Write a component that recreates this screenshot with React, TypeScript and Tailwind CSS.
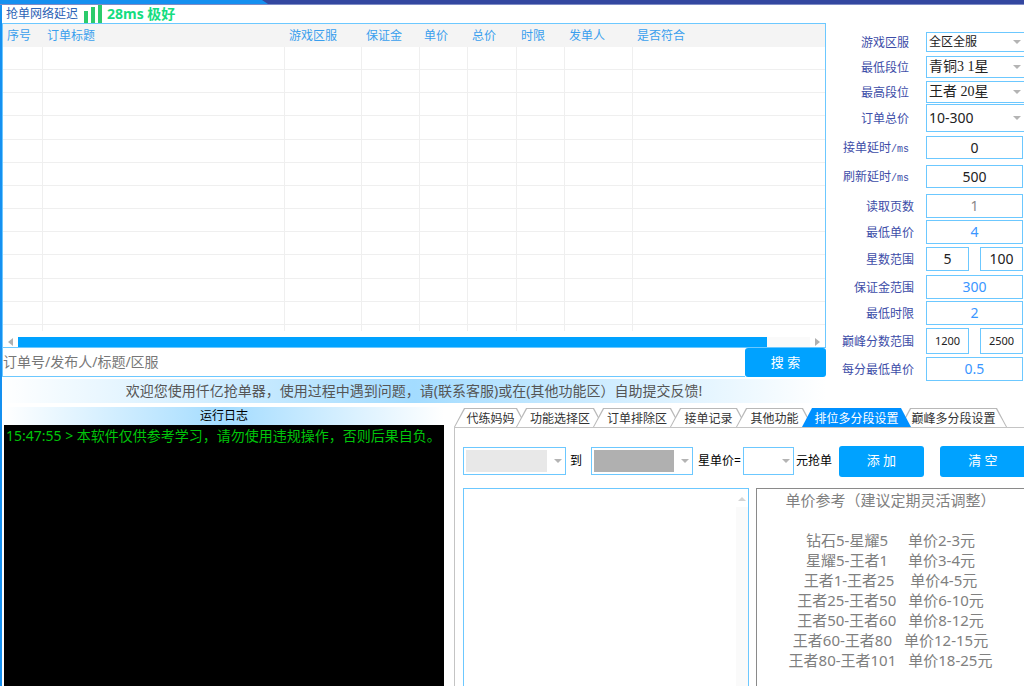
import { useState, type ReactNode } from 'react'

const COLUMNS = [
  { name: '序号', width: 'w-[40px]' },
  { name: '订单标题', width: 'w-[242px]' },
  { name: '游戏区服', width: 'w-[77px]' },
  { name: '保证金', width: 'w-[58px]' },
  { name: '单价', width: 'w-[48px]' },
  { name: '总价', width: 'w-[49px]' },
  { name: '时限', width: 'w-[48px]' },
  { name: '发单人', width: 'w-[68px]' },
  { name: '是否符合', width: '' },
]

const TABS = [
  { name: '代练妈妈', width: 'w-[73px]' },
  { name: '功能选择区', width: 'w-[88px]' },
  { name: '订单排除区', width: 'w-[88px]' },
  { name: '接单记录', width: 'w-[77px]' },
  { name: '其他功能', width: 'w-[77px]' },
  { name: '排位多分段设置', width: 'w-[109px]' },
  { name: '巅峰多分段设置', width: 'w-[107px]' },
]

const PRICES = [
  { range: '钻石5-星耀5', price: '单价2-3元', gap: 'gap-5' },
  { range: '星耀5-王者1', price: '单价3-4元', gap: 'gap-5' },
  { range: '王者1-王者25', price: '单价4-5元', gap: 'gap-4' },
  { range: '王者25-王者50', price: '单价6-10元', gap: 'gap-3' },
  { range: '王者50-王者60', price: '单价8-12元', gap: 'gap-3' },
  { range: '王者60-王者80', price: '单价12-15元', gap: 'gap-3' },
  { range: '王者80-王者101', price: '单价18-25元', gap: 'gap-3' },
]

export default function App() {
  return (
    <div className="flex h-screen flex-col overflow-hidden bg-white font-['Noto_Sans','Noto_Sans_CJK_SC',sans-serif] text-xs text-[#222]">
      <div className="flex h-[5px] shrink-0 border-b border-[#7f8cc6] bg-[#3347a0]">
        <div className="w-[268px] bg-[#1590f0] [clip-path:polygon(0_0,262px_0,100%_100%,0_100%)]" />
      </div>
      <main className="flex min-h-0 flex-1 flex-col border-l-2 border-[#1590f0]">
        <div className="flex shrink-0">
          <div className="min-w-0 flex-1">
            <Latency />
            <OrderTable />
            <SearchBar />
            <p className="mt-0.5 h-6 overflow-hidden bg-linear-to-r from-white via-[#a3dcff] to-white text-center text-sm leading-6 whitespace-nowrap text-[#555]">
              欢迎您使用仟亿抢单器，使用过程中遇到问题，请(联系客服)或在(其他功能区）自助提交反馈!
            </p>
          </div>
          <Filters />
        </div>
        <div className="flex min-h-0 flex-1">
          <RunLog />
          <SettingsTabs />
        </div>
      </main>
    </div>
  )
}

function Latency() {
  return (
    <div className="flex h-[18px] items-center pl-1">
      <span className="text-[#2b62b5]">抢单网络延迟</span>
      <div className="ml-1.5 flex h-full items-end gap-[3px]">
        <i className="h-3 w-1 bg-[#2bcb6b]" />
        <i className="h-4 w-1 bg-[#2bcb6b]" />
        <i className="h-[18px] w-1 bg-[#2bcb6b]" />
      </div>
      <strong className="ml-[5px] text-sm leading-[18px] font-bold text-[#14dd80]">28ms 极好</strong>
    </div>
  )
}

function OrderTable() {
  return (
    <section className="border border-[#6cc8ff]">
      <table className="h-[307px] w-full table-fixed border-separate border-spacing-0">
        <thead>
          <tr className="h-[23px] bg-[#f4f4f4]">
            {COLUMNS.map((c) => (
              <th key={c.name} className={`${c.width} py-0 pr-0 pl-1 text-left leading-5 font-normal whitespace-nowrap text-[#3a9fee]`}>
                {c.name}
              </th>
            ))}
          </tr>
        </thead>
        <tbody>
          {Array.from({ length: 12 }, (_, row) => (
            <tr key={row}>
              {COLUMNS.map((c) => (
                <td key={c.name} className="border-r border-b border-[#efefef] p-0 last:border-r-0" />
              ))}
            </tr>
          ))}
          <tr className="h-[6px]">
            {COLUMNS.map((c) => (
              <td key={c.name} className="border-r border-[#efefef] p-0 last:border-r-0" />
            ))}
          </tr>
        </tbody>
      </table>
      <div className="mt-1.5 flex h-[10px] items-center">
        <span className="flex w-[15px] justify-center">
          <svg className="h-2 w-[5px] fill-[#b0b0b0]" viewBox="0 0 5 8">
            <path d="M5 0v8L0 4z" />
          </svg>
        </span>
        <div className="h-full flex-1 bg-[#fafafa]">
          <div className="h-full w-[94.6%] bg-[#00a2ff]" />
        </div>
        <span className="flex w-[15px] justify-center">
          <svg className="h-2 w-[5px] fill-[#b0b0b0]" viewBox="0 0 5 8">
            <path d="M0 0v8l5-4z" />
          </svg>
        </span>
      </div>
    </section>
  )
}

function SearchBar() {
  const [keyword, setKeyword] = useState('')

  return (
    <div className="flex h-[29px]">
      <input
        aria-label="搜索订单"
        value={keyword}
        onChange={(e) => setKeyword(e.target.value)}
        placeholder="订单号/发布人/标题/区服"
        className="min-w-0 flex-1 border-b border-l border-[#6cc8ff] text-sm outline-none placeholder:text-[#777]"
      />
      <BlueButton className="w-[81px]">搜 索</BlueButton>
    </div>
  )
}

function BlueButton({ children, className = '' }: { children: ReactNode; className?: string }) {
  return (
    <button type="button" className={`shrink-0 rounded-[3px] bg-[#00a2ff] text-[13px] text-white ${className}`}>
      {children}
    </button>
  )
}

function Filters() {
  return (
    <aside className="w-[198px] shrink-0 pt-[27px]">
      <div className="[&_label]:pr-[17px]">
        <SelectRow id="area" label="游戏区服" value="全区全服" size="h-5 text-xs" />
        <SelectRow id="rank-min" label="最低段位" value="青铜3 1星" size="mt-1 h-[22px] text-sm font-['Liberation_Serif','Noto_Sans_CJK_SC',serif]" />
        <SelectRow id="rank-max" label="最高段位" value="王者 20星" size="mt-[3px] h-[22px] text-sm font-['Liberation_Serif','Noto_Sans_CJK_SC',serif]" />
        <SelectRow id="total" label="订单总价" value="10-300" size="mt-px h-7 text-sm" />
        <InputRow id="take-delay" label="接单延时" unit="/ms" values={['0']} size="mt-1 h-[23px]" />
        <InputRow id="refresh-delay" label="刷新延时" unit="/ms" values={['500']} size="mt-1.5 h-[23px]" />
      </div>
      <div className="[&_label]:pr-3">
        <InputRow id="pages" label="读取页数" values={['1']} size="mt-1.5 h-6" color="text-[#888]" />
        <InputRow id="price-min" label="最低单价" values={['4']} size="mt-0.5 h-6" color="text-[#3a96ff]" />
        <InputRow id="stars" label="星数范围" values={['5', '100']} size="mt-[3px] h-6" />
        <InputRow id="deposit" label="保证金范围" values={['300']} size="mt-1 h-6" color="text-[#3a96ff]" />
        <InputRow id="time-min" label="最低时限" values={['2']} size="mt-0.5 h-6" color="text-[#3a96ff]" />
        <InputRow id="peak" label="巅峰分数范围" values={['1200', '2500']} size="mt-[3px] h-[26px]" text="text-[11px]" />
        <InputRow id="point-price" label="每分最低单价" values={['0.5']} size="mt-[3px] h-6" color="text-[#3a96ff]" />
      </div>
    </aside>
  )
}

function RowLabel({ id, children }: { id: string; children: ReactNode }) {
  return (
    <label htmlFor={id} className="w-[100px] shrink-0 text-right font-['Noto_Sans_CJK_SC',sans-serif] text-xs whitespace-nowrap text-[#3d4da8]">
      {children}
    </label>
  )
}

function SelectRow({ id, label, value, size }: { id: string; label: string; value: string; size: string }) {
  return (
    <div className={`flex items-center ${size}`}>
      <RowLabel id={id}>{label}</RowLabel>
      <Dropdown id={id} value={value} className="h-full flex-1 [&>select]:border-r-0 [&>svg]:right-[3px]" />
    </div>
  )
}

type InputRowProps = {
  id: string
  label: string
  unit?: string
  values: string[]
  size: string
  color?: string
  text?: string
}

function InputRow({ id, label, unit, values, size, color = 'text-[#222]', text = 'text-sm' }: InputRowProps) {
  return (
    <div className={`flex items-center pr-px ${size}`}>
      <RowLabel id={id}>
        {label}
        {unit && <span className="font-['Liberation_Mono',monospace] text-[10px]">{unit}</span>}
      </RowLabel>
      <div className="flex h-full min-w-0 flex-1 gap-[11px]">
        {values.map((v, i) => (
          <input
            key={v}
            id={i === 0 ? id : `${id}-to`}
            aria-label={i === 0 ? undefined : `${label}上限`}
            defaultValue={v}
            className={`w-full min-w-0 border border-[#6cc8ff] text-center outline-none ${color} ${text}`}
          />
        ))}
      </div>
    </div>
  )
}

type DropdownProps = {
  id: string
  value?: string
  label?: string
  fill?: string
  className?: string
}

function Dropdown({ id, value = '', label, fill, className = '' }: DropdownProps) {
  return (
    <div className={`relative shrink-0 ${className}`}>
      <select id={id} aria-label={label} className="block h-full w-full appearance-none border border-[#6cc8ff] bg-white pl-0.5 outline-none">
        <option>{value}</option>
      </select>
      {fill && <div className={`pointer-events-none absolute inset-y-[3px] right-[19px] left-[3px] ${fill}`} />}
      <svg className="pointer-events-none absolute top-1/2 right-1 h-1 w-2 -translate-y-1/2 fill-[#b4b4b4]" viewBox="0 0 8 4">
        <path d="M0 0h8L4 4z" />
      </svg>
    </div>
  )
}

function RunLog() {
  return (
    <section className="mt-1 ml-0.5 flex w-[440px] shrink-0 flex-col">
      <h2 className="h-[18px] bg-linear-to-r from-white via-[#a3dcff] to-white text-center leading-[18px] text-black">运行日志</h2>
      <div className="flex-1 bg-black pl-0.5 text-sm leading-[22px] whitespace-nowrap text-[#00c40a]">
        15:47:55 &gt; 本软件仅供参考学习，请勿使用违规操作，否则后果自负。
      </div>
    </section>
  )
}

function SettingsTabs() {
  const [active, setActive] = useState('排位多分段设置')

  return (
    <section className="mt-[5px] ml-2.5 flex min-w-0 flex-1 flex-col">
      <div role="tablist" className="flex h-[19px] shrink-0">
        {TABS.map((t) => {
          const on = t.name === active
          return (
            <button
              key={t.name}
              type="button"
              role="tab"
              aria-selected={on}
              onClick={() => setActive(t.name)}
              className={`-ml-[11px] shrink-0 px-px pt-px [clip-path:polygon(10px_0,calc(100%-10px)_0,100%_100%,0_100%)] first:ml-0 ${t.width} ${on ? 'relative z-10 bg-[#0090ff] text-white' : 'bg-[#b8b8b8] text-[#333]'}`}
            >
              <span className={`block h-full leading-5 whitespace-nowrap [clip-path:polygon(10px_0,calc(100%-10px)_0,100%_100%,0_100%)] ${on ? 'bg-[#0090ff]' : 'bg-white'}`}>
                {t.name}
              </span>
            </button>
          )
        })}
      </div>
      <div className="flex min-h-0 flex-1 flex-col border-t border-l border-[#c4c4c4] pt-[17px] pl-2">
        <div className="flex h-8 shrink-0 items-center whitespace-nowrap text-black">
          <Dropdown id="from" label="起始段位" fill="bg-[#e8e8e8]" className="h-7 w-[103px]" />
          <label htmlFor="to" className="ml-1">到</label>
          <Dropdown id="to" fill="bg-[#b0b0b0]" className="ml-[9px] h-7 w-[102px]" />
          <label htmlFor="star-price" className="ml-[5px]">星单价=</label>
          <Dropdown id="star-price" className="ml-0.5 h-7 w-[51px]" />
          <span className="ml-0.5">元抢单</span>
          <BlueButton className="ml-[7px] h-[31px] w-[85px]">添 加</BlueButton>
          <BlueButton className="ml-4 h-[31px] w-[86px]">清 空</BlueButton>
        </div>
        <div className="mt-[11px] flex min-h-0 flex-1 gap-[7px]">
          <div className="flex w-[286px] shrink-0 justify-end border border-b-0 border-[#6cc8ff]">
            <div className="flex w-3 flex-col items-center pt-2">
              <svg className="h-1 w-2 fill-[#d4d4d4]" viewBox="0 0 8 4">
                <path d="M0 4h8L4 0z" />
              </svg>
              <div className="mt-1.5 w-full flex-1 bg-[#fafafa]" />
            </div>
          </div>
          <div className="min-w-0 flex-1 border-t border-l border-[#8a8a8a] pt-px text-[15px] leading-5 whitespace-nowrap text-[#808080]">
            <h3 className="mb-5 text-center">单价参考（建议定期灵活调整）</h3>
            {PRICES.map((p) => (
              <p key={p.range} className={`flex justify-center ${p.gap}`}>
                <span>{p.range}</span>
                <span>{p.price}</span>
              </p>
            ))}
          </div>
        </div>
      </div>
    </section>
  )
}
